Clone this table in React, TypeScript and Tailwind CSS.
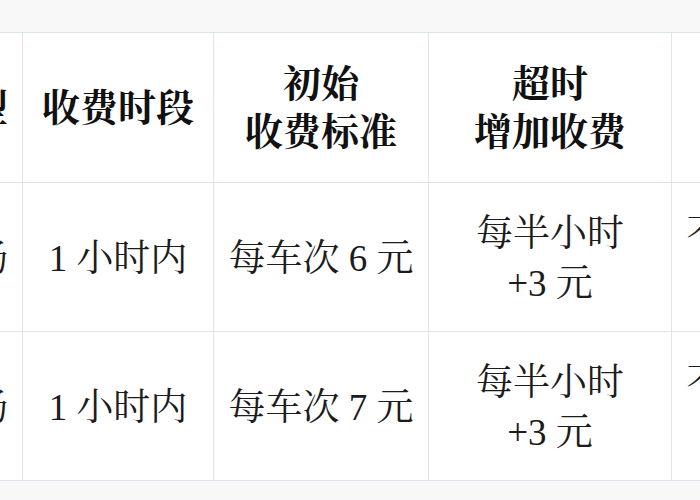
const FONT =
  '"Liberation Serif", "Noto Serif CJK SC", "Noto Sans CJK SC", serif'

const HEAD = [
  { w: 'w-[192px]', lines: ['车型'], cls: 'text-right pr-[14px]' },
  { w: 'w-[191px]', lines: ['收费时段'] },
  { w: 'w-[215px]', lines: ['初始', '收费标准'] },
  { w: 'w-[243px]', lines: ['超时', '增加收费'] },
  { w: 'w-[215px]', lines: ['备注'] },
]

const ROWS = [
  [['露天车场'], ['1 小时内'], ['每车次 6 元'], ['每半小时', '+3 元'], ['不足半小时', '按时计']],
  [['地下车场'], ['1 小时内'], ['每车次 7 元'], ['每半小时', '+3 元'], ['不足半小时', '按时计']],
]

function Cell({ lines, className = '' }: { lines: string[]; className?: string }) {
  return (
    <td className={`border border-[#dfe3ea] align-middle overflow-hidden ${className}`}>
      {lines.map((l, i) => (
        <div key={i} className="whitespace-nowrap">
          {l}
        </div>
      ))}
    </td>
  )
}

export default function App() {
  return (
    <div
      className="w-[700px] h-[500px] overflow-hidden bg-[#f8f8f8] pt-[32px]"
      style={{ fontFamily: FONT }}
    >
      <table className="ml-[-170px] border-collapse bg-white text-[#1c1c1c] table-fixed w-[1056px]">
        <colgroup>
          {HEAD.map((h, i) => (
            <col key={i} className={h.w} />
          ))}
        </colgroup>
        <thead>
          <tr className="h-[150px]">
            {HEAD.map((h, i) => (
              <Cell
                key={i}
                lines={h.lines}
                className={`text-[38px] font-bold leading-[48px] text-[#111] ${h.cls ?? 'text-center'}`}
              />
            ))}
          </tr>
        </thead>
        <tbody>
          {ROWS.map((row, r) => (
            <tr key={r} className="h-[149px]">
              {row.map((c, i) => (
                <Cell
                  key={i}
                  lines={c}
                  className={`text-[37px] leading-[50px] pt-[4px] ${i === 0 ? 'text-right pr-[14px]' : 'text-center'}`}
                />
              ))}
            </tr>
          ))}
        </tbody>
      </table>
    </div>
  )
}
